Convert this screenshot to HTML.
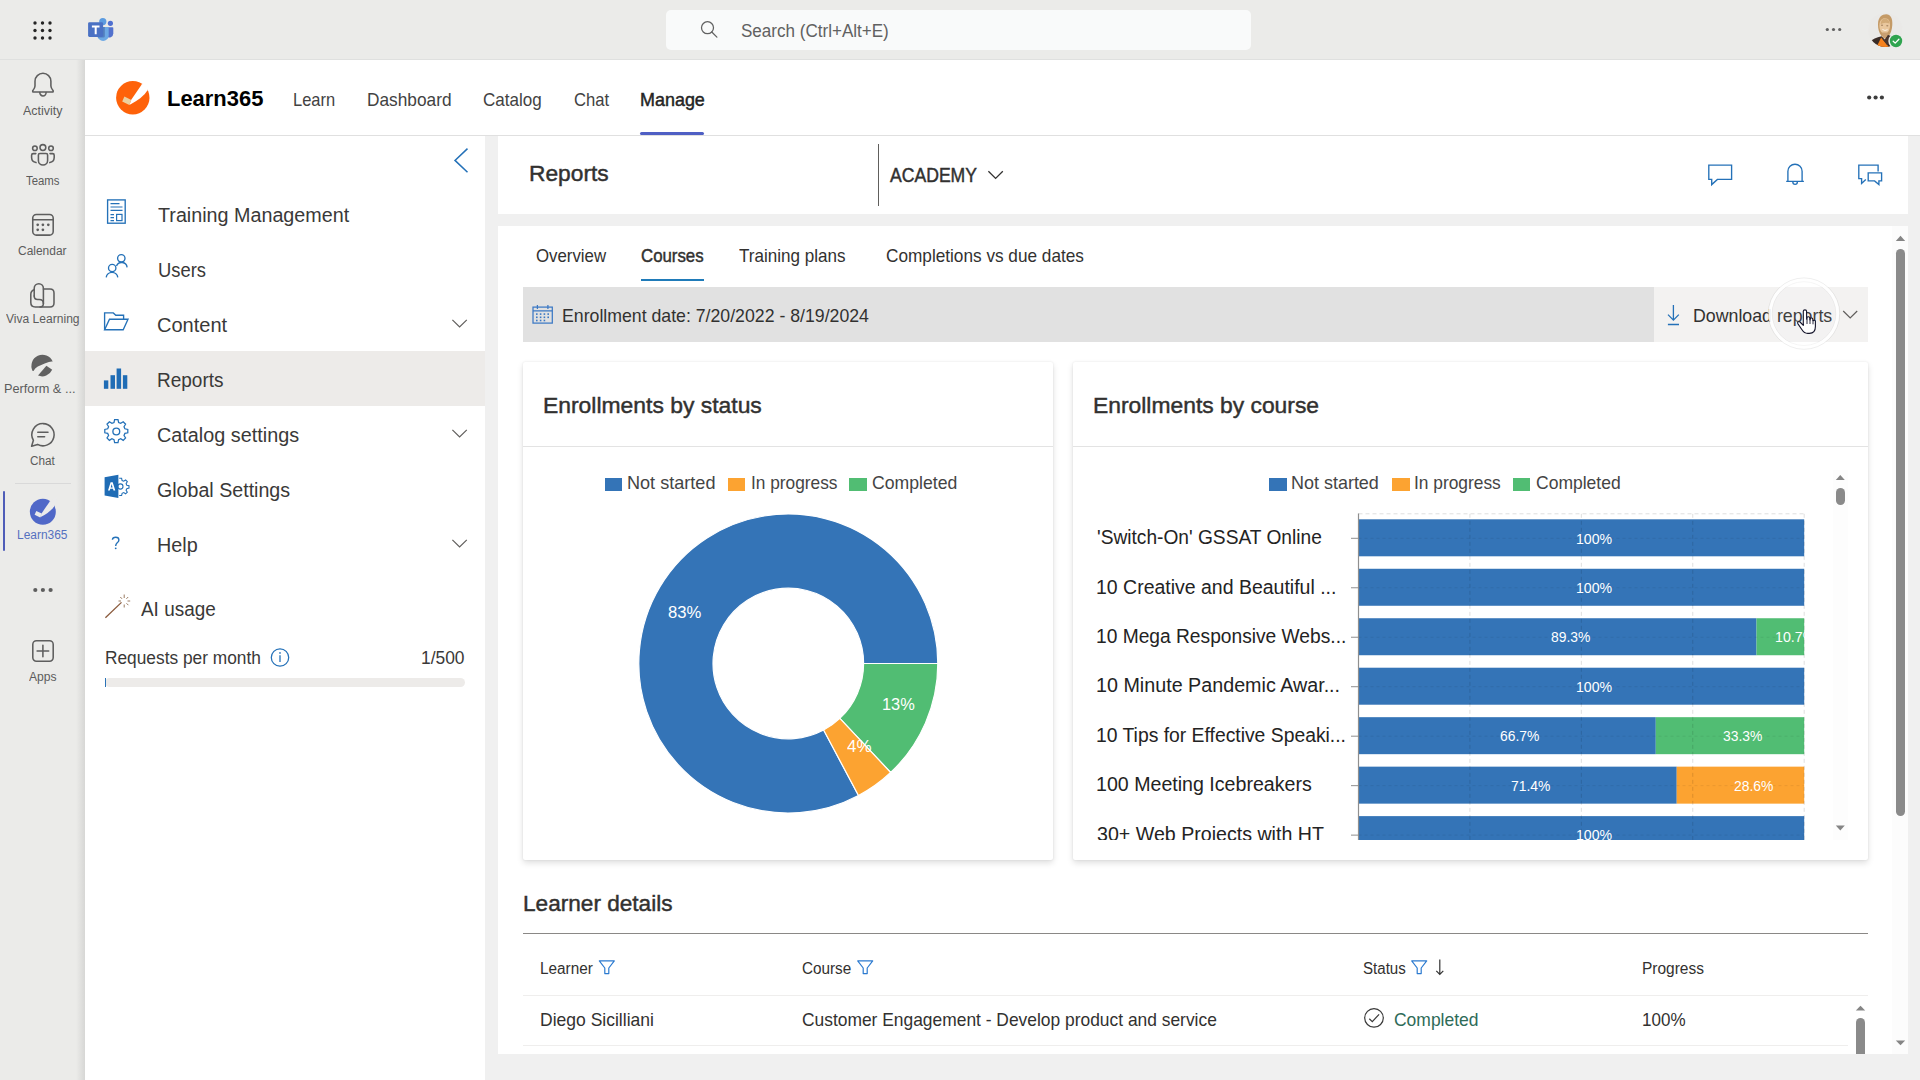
<!DOCTYPE html>
<html>
<head>
<meta charset="utf-8">
<title>Learn365</title>
<style>
*{box-sizing:border-box;margin:0;padding:0}
html,body{width:1920px;height:1080px;overflow:hidden;background:#f0f0f0;font-family:"Liberation Sans",sans-serif;color:#242424}
.abs,svg.i{position:absolute}
svg.i{overflow:visible}
.t{position:absolute;white-space:pre;line-height:1;transform-origin:0 0}
#topbar{left:0;top:0;width:1920px;height:60px;background:#ebebe9;border-bottom:1px solid #dfe0df}
#rail{left:0;top:60px;width:85px;height:1020px;background:#ebebe9}
#railshadow{left:75.5px;top:60px;width:9.5px;height:1020px;background:linear-gradient(to right,rgba(0,0,0,0),rgba(0,0,0,0.085))}
#search{left:666px;top:10px;width:585px;height:40px;background:#f9fafa;border-radius:5px}
#apphead{left:85px;top:60px;width:1835px;height:76px;background:#fff;border-bottom:1px solid #e0e0e0}
#side{left:85px;top:136px;width:400px;height:944px;background:#fff}
#rephead{left:498px;top:136px;width:1410px;height:78px;background:#fff}
#content{left:498px;top:226px;width:1410px;height:828px;background:#fff}
.card{position:absolute;background:#fff;border-radius:2px;box-shadow:0 3px 6px rgba(0,0,0,0.13),0 0 2px rgba(0,0,0,0.10)}
</style>
</head>
<body>
<div id="topbar" class="abs"></div>
<div id="rail" class="abs"></div>
<div id="railshadow" class="abs"></div>
<div id="search" class="abs"></div>
<div id="apphead" class="abs"></div>
<div id="side" class="abs"></div>
<div id="rephead" class="abs"></div>
<div id="content" class="abs"></div>
<!-- rail selection + separator -->
<div class="abs" style="left:15px;top:483px;width:56px;height:1px;background:#d9d9d9"></div>
<div class="abs" style="left:3.2px;top:491.3px;width:2px;height:59.6px;background:#4f5db8;border-radius:1px"></div>
<!-- app header underline -->
<div class="abs" style="left:640px;top:131.8px;width:64px;height:3.2px;background:#4f5fc4;border-radius:2px"></div>
<!-- side nav selected row -->
<div class="abs" style="left:85px;top:351px;width:400px;height:54.5px;background:#edebe9"></div>
<!-- progress bar -->
<div class="abs" style="left:105px;top:678px;width:360px;height:8.5px;background:#edebe9;border-radius:4.5px"></div>
<div class="abs" style="left:104.6px;top:677.5px;width:1.2px;height:9.5px;background:#2b73b7"></div>
<!-- reports header divider -->
<div class="abs" style="left:878px;top:144px;width:1px;height:62px;background:#605e5c"></div>
<!-- tab underline -->
<div class="abs" style="left:640.5px;top:278.6px;width:63.5px;height:2.8px;background:#1f7bb9"></div>
<!-- filter bar -->
<div class="abs" style="left:523px;top:287px;width:1131px;height:54.7px;background:#e1e1e1"></div>
<div class="abs" style="left:1654px;top:287px;width:214px;height:54.7px;background:#f3f2f1"></div>
<!-- cards -->
<div class="card" style="left:523px;top:362px;width:530px;height:497.5px"></div>
<div class="card" style="left:1073px;top:362px;width:795px;height:497.5px"></div>
<div class="abs" style="left:523px;top:446px;width:530px;height:1px;background:#e3e3e3"></div>
<div class="abs" style="left:1073px;top:446px;width:795px;height:1px;background:#e3e3e3"></div>
<!-- legends swatches -->
<div class="abs" style="left:605px;top:478.4px;width:17.4px;height:12.6px;background:#3474b7"></div>
<div class="abs" style="left:728px;top:478.4px;width:17.4px;height:12.6px;background:#fca331"></div>
<div class="abs" style="left:849.2px;top:478.4px;width:17.4px;height:12.6px;background:#51bd73"></div>
<div class="abs" style="left:1269.2px;top:478.4px;width:17.4px;height:12.6px;background:#3474b7"></div>
<div class="abs" style="left:1392.2px;top:478.4px;width:17.4px;height:12.6px;background:#fca331"></div>
<div class="abs" style="left:1512.8px;top:478.4px;width:17.4px;height:12.6px;background:#51bd73"></div>
<!-- donut -->
<svg class="i" style="left:628px;top:505px" width="320" height="320" viewBox="628 505 320 320">
<path fill="#3474b7" stroke="#fff" stroke-width="1.2" stroke-linejoin="round" d="M858.49 795.50 A149.5 149.5 0 1 1 937.80 663.50 L863.60 663.50 A75.3 75.3 0 1 0 823.65 729.99 Z"/>
<path fill="#51bd73" stroke="#fff" stroke-width="1.2" stroke-linejoin="round" d="M937.80 663.50 A149.5 149.5 0 0 1 890.64 772.48 L839.85 718.39 A75.3 75.3 0 0 0 863.60 663.50 Z"/>
<path fill="#fca331" stroke="#fff" stroke-width="1.2" stroke-linejoin="round" d="M890.64 772.48 A149.5 149.5 0 0 1 858.49 795.50 L823.65 729.99 A75.3 75.3 0 0 0 839.85 718.39 Z"/>
</svg>
<!-- bar chart clip group -->
<div class="abs" style="left:1073px;top:447px;width:731.6px;height:393px;overflow:hidden">
<svg class="i" style="left:0;top:0" width="732" height="393" viewBox="1073 447 732 393">
<rect x="1358.50" y="519.30" width="445.70" height="37" fill="#3474b7"/>
<rect x="1351" y="537.80" width="7.5" height="1" fill="#8f8f8f"/>
<rect x="1358.50" y="568.77" width="445.70" height="37" fill="#3474b7"/>
<rect x="1351" y="587.27" width="7.5" height="1" fill="#8f8f8f"/>
<rect x="1358.50" y="618.24" width="398.01" height="37" fill="#3474b7"/>
<rect x="1756.51" y="618.24" width="47.69" height="37" fill="#51bd73"/>
<rect x="1351" y="636.74" width="7.5" height="1" fill="#8f8f8f"/>
<rect x="1358.50" y="667.71" width="445.70" height="37" fill="#3474b7"/>
<rect x="1351" y="686.21" width="7.5" height="1" fill="#8f8f8f"/>
<rect x="1358.50" y="717.18" width="297.28" height="37" fill="#3474b7"/>
<rect x="1655.78" y="717.18" width="148.42" height="37" fill="#51bd73"/>
<rect x="1351" y="735.68" width="7.5" height="1" fill="#8f8f8f"/>
<rect x="1358.50" y="766.65" width="318.23" height="37" fill="#3474b7"/>
<rect x="1676.73" y="766.65" width="127.47" height="37" fill="#fca331"/>
<rect x="1351" y="785.15" width="7.5" height="1" fill="#8f8f8f"/>
<rect x="1358.50" y="816.12" width="445.70" height="37" fill="#3474b7"/>
<rect x="1351" y="834.62" width="7.5" height="1" fill="#8f8f8f"/>
<rect x="1357.90" y="513.5" width="1.2" height="330" fill="#8f8f8f"/>
<line x1="1469.92" y1="513.8" x2="1469.92" y2="845" stroke="#000" stroke-opacity="0.13" stroke-width="1" stroke-dasharray="4 3"/>
<line x1="1581.35" y1="513.8" x2="1581.35" y2="845" stroke="#000" stroke-opacity="0.13" stroke-width="1" stroke-dasharray="4 3"/>
<line x1="1692.78" y1="513.8" x2="1692.78" y2="845" stroke="#000" stroke-opacity="0.13" stroke-width="1" stroke-dasharray="4 3"/>
<line x1="1804.20" y1="513.8" x2="1804.20" y2="845" stroke="#000" stroke-opacity="0.13" stroke-width="1" stroke-dasharray="4 3"/>
<line x1="1358.50" y1="513.8" x2="1804.20" y2="513.8" stroke="#000" stroke-opacity="0.13" stroke-width="1" stroke-dasharray="4 3"/>
<line x1="1358.50" y1="538.30" x2="1804.20" y2="538.30" stroke="#000" stroke-opacity="0.07" stroke-width="1" stroke-dasharray="3 3"/>
<line x1="1358.50" y1="587.77" x2="1804.20" y2="587.77" stroke="#000" stroke-opacity="0.07" stroke-width="1" stroke-dasharray="3 3"/>
<line x1="1358.50" y1="637.24" x2="1804.20" y2="637.24" stroke="#000" stroke-opacity="0.07" stroke-width="1" stroke-dasharray="3 3"/>
<line x1="1358.50" y1="686.71" x2="1804.20" y2="686.71" stroke="#000" stroke-opacity="0.07" stroke-width="1" stroke-dasharray="3 3"/>
<line x1="1358.50" y1="736.18" x2="1804.20" y2="736.18" stroke="#000" stroke-opacity="0.07" stroke-width="1" stroke-dasharray="3 3"/>
<line x1="1358.50" y1="785.65" x2="1804.20" y2="785.65" stroke="#000" stroke-opacity="0.07" stroke-width="1" stroke-dasharray="3 3"/>
<line x1="1358.50" y1="835.12" x2="1804.20" y2="835.12" stroke="#000" stroke-opacity="0.07" stroke-width="1" stroke-dasharray="3 3"/>
</svg>
<span class="t" style="left:24.0px;top:81px;font-size:19.5px;color:#232323;transform:scaleX(0.9821)">&#x27;Switch-On&#x27; GSSAT Online</span>
<span class="t" style="left:23.0px;top:131px;font-size:19.5px;color:#232323;transform:scaleX(0.9990)">10 Creative and Beautiful ...</span>
<span class="t" style="left:23.0px;top:180px;font-size:19.5px;color:#232323;transform:scaleX(0.9840)">10 Mega Responsive Webs...</span>
<span class="t" style="left:23.0px;top:229px;font-size:19.5px;color:#232323;transform:scaleX(1.0112)">10 Minute Pandemic Awar...</span>
<span class="t" style="left:23.0px;top:279px;font-size:19.5px;color:#232323;transform:scaleX(0.9911)">10 Tips for Effective Speaki...</span>
<span class="t" style="left:23.0px;top:328px;font-size:19.5px;color:#232323;transform:scaleX(1.0053)">100 Meeting Icebreakers</span>
<span class="t" style="left:24.0px;top:378px;font-size:19.5px;color:#232323;transform:scaleX(1.0058)">30+ Web Projects with HT</span>
<span class="t" style="left:502.5px;top:84px;font-size:15.5px;color:#fff;transform:scaleX(0.9109)">100%</span>
<span class="t" style="left:502.5px;top:133px;font-size:15.5px;color:#fff;transform:scaleX(0.9109)">100%</span>
<span class="t" style="left:477.5px;top:182px;font-size:15.5px;color:#fff;transform:scaleX(0.8966)">89.3%</span>
<span class="t" style="left:701.6px;top:182px;font-size:15.5px;color:#fff;transform:scaleX(0.9174)">10.7%</span>
<span class="t" style="left:502.5px;top:232px;font-size:15.5px;color:#fff;transform:scaleX(0.9109)">100%</span>
<span class="t" style="left:427.1px;top:281px;font-size:15.5px;color:#fff;transform:scaleX(0.8966)">66.7%</span>
<span class="t" style="left:650.0px;top:281px;font-size:15.5px;color:#fff;transform:scaleX(0.8966)">33.3%</span>
<span class="t" style="left:437.6px;top:331px;font-size:15.5px;color:#fff;transform:scaleX(0.8966)">71.4%</span>
<span class="t" style="left:660.5px;top:331px;font-size:15.5px;color:#fff;transform:scaleX(0.8966)">28.6%</span>
<span class="t" style="left:502.5px;top:380px;font-size:15.5px;color:#fff;transform:scaleX(0.9109)">100%</span>
</div>
<!-- chart scroll -->
<div class="abs" style="left:1833px;top:470px;width:15px;height:370px;background:#fdfdfd"></div>
<svg class="i" style="left:1835px;top:474px" width="11" height="7" viewBox="0 0 11 7"><path d="M0.8 6 L5.3 1 L9.8 6 Z" fill="#858585"/></svg>
<svg class="i" style="left:1835px;top:824.5px" width="11" height="7" viewBox="0 0 11 7"><path d="M0.8 0.5 L5.3 5.5 L9.8 0.5 Z" fill="#858585"/></svg>
<div class="abs" style="left:1836px;top:488px;width:9px;height:17px;background:#8a8a8a;border-radius:4.5px"></div>
<!-- main scroll -->
<div class="abs" style="left:1892px;top:226px;width:16px;height:828px;background:#fcfcfc"></div>
<svg class="i" style="left:1895px;top:235px" width="11" height="7" viewBox="0 0 11 7"><path d="M0.8 6 L5.5 0.7 L10.2 6 Z" fill="#858585"/></svg>
<svg class="i" style="left:1895px;top:1039.5px" width="11" height="7" viewBox="0 0 11 7"><path d="M0.8 0.5 L5.5 5.3 L10.2 0.5 Z" fill="#858585"/></svg>
<div class="abs" style="left:1896px;top:249px;width:9px;height:567px;background:#8a8a8a;border-radius:4.5px"></div>
<!-- table -->
<div class="abs" style="left:523px;top:933.3px;width:1345px;height:1px;background:#8a8886"></div>
<div class="abs" style="left:523px;top:994.5px;width:1345px;height:1px;background:#efeeed"></div>
<div class="abs" style="left:523px;top:1045px;width:1325px;height:1px;background:#efeeed"></div>
<svg class="i" style="left:1855px;top:1005px" width="11" height="7" viewBox="0 0 11 7"><path d="M0.8 5.5 L5.5 0.7 L10.2 5.5 Z" fill="#858585"/></svg>
<div class="abs" style="left:1856px;top:1018px;width:9px;height:40px;background:#8a8a8a;border-radius:4.5px;clip-path:inset(0 0 4px 0)"></div>

<!-- waffle -->
<svg class="i" style="left:30px;top:18px" width="25" height="25" viewBox="30 18 25 25"><g fill="#242424">
<circle cx="35" cy="23" r="1.7"/><circle cx="42.5" cy="23" r="1.7"/><circle cx="50" cy="23" r="1.7"/>
<circle cx="35" cy="30.5" r="1.7"/><circle cx="42.5" cy="30.5" r="1.7"/><circle cx="50" cy="30.5" r="1.7"/>
<circle cx="35" cy="38" r="1.7"/><circle cx="42.5" cy="38" r="1.7"/><circle cx="50" cy="38" r="1.7"/></g></svg>
<!-- teams logo -->
<svg class="i" style="left:86px;top:16px" width="30" height="28" viewBox="86 16 30 28">
<circle cx="110.4" cy="23.3" r="2.6" fill="#4f6fd0"/>
<path d="M106.5 27.2 h6 a0.8 0.8 0 0 1 .8 .8 v5.5 a4 4 0 0 1 -6.8 2.8 Z" fill="#5271cd"/>
<circle cx="102.8" cy="21.6" r="3.6" fill="#5b9be0"/>
<path d="M97.5 27 h10.2 a1 1 0 0 1 1 1 v7.4 a5.6 5.6 0 0 1 -11.2 0 Z" fill="#6ca8e4"/>
<path d="M98 27 h6.8 v9.2 a1.2 1.2 0 0 1 -1.2 1.2 h-5.9 a5.6 5.6 0 0 1 .3 -2 Z" fill="#3f5f9f" opacity=".55"/>
<rect x="88.1" y="22.2" width="15" height="14.7" rx="1.3" fill="#4a71c4"/>
<path d="M91.9 25.6 h7.6 v1.8 h-2.8 v6.8 h-2 v-6.8 h-2.8 Z" fill="#fff"/>
</svg>
<!-- search icon -->
<svg class="i" style="left:700px;top:20px" width="20" height="20" viewBox="700 20 20 20" fill="none" stroke="#616161" stroke-width="1.25" stroke-linecap="round"><circle cx="707.5" cy="27.7" r="6"/><path d="M711.8 32 L716.9 37.1"/></svg>
<!-- more -->
<svg class="i" style="left:1824px;top:26px" width="20" height="8" viewBox="1824 26 20 8" fill="#616161"><circle cx="1827.3" cy="29.5" r="1.6"/><circle cx="1833.5" cy="29.5" r="1.6"/><circle cx="1839.7" cy="29.5" r="1.6"/></svg>
<!-- avatar -->
<svg class="i" style="left:1866px;top:11px" width="40" height="40" viewBox="1866 11 40 40">
<defs><clipPath id="avc"><circle cx="1885.3" cy="30" r="17"/></clipPath></defs>
<circle cx="1885.3" cy="30" r="17" fill="#eae9e7"/>
<g clip-path="url(#avc)">
<path d="M1878 24.5 C1878 17 1882 14.3 1886.2 14.3 C1890.6 14.3 1892.8 18.5 1892.3 25 C1892 30 1890.5 34 1888.5 36 L1881.5 36 C1879 33 1878 29 1878 24.5 Z" fill="#c49a66"/>
<path d="M1879.4 25.5 C1879.4 20.5 1882 18.3 1884.8 18.3 C1888.4 18.3 1890.3 21 1890 26 C1889.7 30.5 1887.6 33.6 1884.7 33.6 C1881.6 33.6 1879.4 30.3 1879.4 25.5 Z" fill="#e9c79d"/>
<path d="M1880.6 24.2 Q1884 21.6 1889.6 23.4 Q1889 19 1885 18.6 Q1881 18.6 1880.6 24.2 Z" fill="#d2ab78"/>
<path d="M1882.3 32.5 H1887.6 V38.5 H1882.3 Z" fill="#caa072"/>
<ellipse cx="1882" cy="25.3" rx="1.1" ry="0.7" fill="#8a6848" opacity=".65"/><ellipse cx="1887.3" cy="25.7" rx="1.1" ry="0.7" fill="#8a6848" opacity=".65"/>
<path d="M1882.4 29.4 Q1884.8 31.4 1887.6 29.7" fill="none" stroke="#fbf3ea" stroke-width="1"/>
<path d="M1869 42.5 Q1874 37.6 1881.6 36.2 L1884.8 39.8 L1888 35 Q1895 36 1899 44 L1899 49 L1869 49 Z" fill="#3a2c27"/>
<path d="M1875.5 49 L1881.2 37.6 L1890.5 49 Z" fill="#f6821e"/>
<path d="M1881.2 37.6 L1884.8 39.8 L1888 35.2 L1891 42 L1887 45 Z" fill="#4a352c"/>
</g>
<circle cx="1896" cy="41" r="7.7" fill="#ebebe9"/>
<circle cx="1896" cy="41" r="6.2" fill="#2fa44f"/>
<path d="M1893.2 41.2 L1895.2 43.1 L1898.9 39.2" fill="none" stroke="#fff" stroke-width="1.3" stroke-linecap="round" stroke-linejoin="round"/>
</svg>
<!-- app header more -->
<svg class="i" style="left:1866px;top:94px" width="20" height="8" viewBox="1866 94 20 8" fill="#3d3d3d"><circle cx="1869.2" cy="97.5" r="2.1"/><circle cx="1875.6" cy="97.5" r="2.1"/><circle cx="1881.9" cy="97.5" r="2.1"/></svg>

<svg class="i" style="left:0;top:60px" width="85" height="640" viewBox="0 60 85 640" fill="none" stroke="#5e5e5e" stroke-width="1.55" stroke-linecap="round" stroke-linejoin="round">
<!-- activity bell -->
<path d="M35 86 V81.2 A7.95 7.95 0 0 1 50.9 81.2 V86 Q51 88.2 53 90.4 Q53.7 92 52.3 92 H33.6 Q32.2 92 32.9 90.4 Q34.9 88.2 35 86 Z"/>
<path d="M39.8 92.4 A3.15 3.5 0 0 0 46.1 92.4"/>
<!-- teams -->
<circle cx="42.9" cy="147.5" r="2.9"/><circle cx="34.9" cy="148.2" r="2.3"/><circle cx="51" cy="148.2" r="2.3"/>
<path d="M39.9 153.4 H46.1 Q47.6 153.4 47.6 154.9 V160.4 A4.6 4.6 0 0 1 38.4 160.4 V154.9 Q38.4 153.4 39.9 153.4 Z"/>
<path d="M35.8 153.6 H33.2 Q31.6 153.6 31.6 155.2 V157.6 A5.2 5.2 0 0 0 36 162.6"/>
<path d="M50 153.6 H52.6 Q54.2 153.6 54.2 155.2 V157.6 A5.2 5.2 0 0 1 49.8 162.6"/>
<!-- calendar -->
<rect x="32.75" y="214.5" width="20.45" height="20.6" rx="3.6"/>
<path d="M32.75 219.7 H53.2"/>
<g fill="#5e5e5e" stroke="none"><circle cx="37.7" cy="224.8" r="1.35"/><circle cx="42.9" cy="224.8" r="1.35"/><circle cx="48.3" cy="224.8" r="1.35"/><circle cx="37.7" cy="229.8" r="1.35"/><circle cx="42.9" cy="229.8" r="1.35"/></g>
<!-- viva learning -->
<path d="M34.2 296 V288.4 A4.6 4.6 0 0 1 43.4 288.4 V303.5"/>
<path d="M34.2 296 Q34.2 299.4 37.6 299.4 H39.2 Q43.4 299.4 43.4 303.5 Q43.4 307 40 307"/>
<path d="M34.2 289.7 Q30.8 290.6 30.8 294.5 V302.6 Q30.8 307 35.2 307 H50 Q54 307 54 303 V293 Q54 289 50 289 H43.4"/>
<!-- perform -->
<g fill="#616161" stroke="none">
<path d="M32.6 370.9 A11.1 11.1 0 1 1 52.7 361.5 Q50.3 360.9 45.3 363.3 Q38.8 365.9 37.4 366.8 Q35 368.4 33.5 370.9 Z"/>
<path d="M46.4 365.7 L52.2 369.8 A11.1 11.1 0 0 1 38 375.6 Z"/>
</g>
<!-- chat -->
<path d="M43 423.6 A11.1 11.1 0 1 1 37.6 444.4 L31.6 446.2 L33.4 440.3 A11.1 11.1 0 0 1 43 423.6 Z"/>
<path d="M37.8 432.2 H48 M37.8 436.8 H44.6"/>
<!-- more -->
<g fill="#5e5e5e" stroke="none"><circle cx="35.3" cy="590" r="2.1"/><circle cx="42.9" cy="590" r="2.1"/><circle cx="50.6" cy="590" r="2.1"/></g>
<!-- apps -->
<rect x="32.8" y="640.8" width="20.4" height="20.4" rx="3.6"/>
<path d="M42.9 645.2 V656.8 M37.1 651 H48.7"/>
</svg>
<!-- learn365 rail icon -->
<svg class="i" style="left:29px;top:498px" width="28" height="28" viewBox="115 79.5 36 36">
<circle cx="132.8" cy="97.2" r="16.7" fill="#5068c8"/>
<path d="M131.1 99.4 L141.7 83.9 L151 78 L147.4 90 Q143 97.5 129.4 104.4 Z" fill="#ebebeb"/>
<path d="M124.4 96.1 L131.3 99.4 L129.4 104.6 L122.2 101.1 Z" fill="#ebebeb"/>
</svg>
<!-- learn365 header logo -->
<svg class="i" style="left:115px;top:79.5px" width="36" height="36" viewBox="115 79.5 36 36">
<circle cx="132.8" cy="97.2" r="16.7" fill="#fe620a"/>
<path d="M131.1 99.4 L141.7 83.9 L151 78 L147.4 90 Q143 97.5 129.4 104.4 Z" fill="#fff"/>
<path d="M124.4 96.1 L131.3 99.4 L129.4 104.6 L122.2 101.1 Z" fill="#ecd0a0"/>
</svg>

<svg class="i" style="left:85px;top:136px" width="400" height="570" viewBox="85 136 400 570" fill="none" stroke="#2471b8" stroke-width="1.35" stroke-linejoin="miter">
<!-- collapse chevron -->
<path d="M467.5 148.6 L455 160.4 L467.5 172.2" stroke-width="1.5"/>
<!-- training management -->
<rect x="107.6" y="199.9" width="17.6" height="23.3"/>
<path d="M110.5 203.6 H119.5 M110.5 207 H122.5 M110.5 210.4 H122.5 M110.5 214.6 H114 M110.5 217.6 H114 M110.5 220.6 H114" stroke-width="1.2"/>
<rect x="116.6" y="214.4" width="5.4" height="6.2" stroke-width="1.2"/>
<!-- users -->
<circle cx="121.3" cy="258.3" r="3.7"/>
<path d="M116.5 266 A5.5 5.5 0 0 1 127.1 267.4"/>
<circle cx="112.2" cy="268" r="3.7"/>
<path d="M106.2 277.4 A5.85 5.85 0 0 1 117.8 277.4"/>
<!-- content folder -->
<path d="M104.6 329.6 V312.9 H113.3 L115.8 315.2 H123.6 V319.2"/>
<path d="M104.6 329.7 L109.5 319.2 H128 L123.2 329.7 Z"/>
<!-- catalog settings gear -->
<circle cx="116.3" cy="431.5" r="3.4"/>
<path id="gear" d="M114.6 419.6 H118 L118.6 422.5 L120.7 423.4 L123.2 421.8 L125.6 424.2 L124 426.7 L124.9 428.8 L127.8 429.4 V432.8 L124.9 433.4 L124 435.5 L125.6 438 L123.2 440.4 L120.7 438.8 L118.6 439.7 L118 442.6 H114.6 L114 439.7 L111.9 438.8 L109.4 440.4 L107 438 L108.6 435.5 L107.7 433.4 L104.8 432.8 V429.4 L107.7 428.8 L108.6 426.7 L107 424.2 L109.4 421.8 L111.9 423.4 L114 422.5 Z" stroke-width="1.25"/>
<!-- help ? -->
<path d="M112.4 539.8 Q112.6 537.2 115.7 537.2 Q118.9 537.2 118.9 539.9 Q118.9 541.4 117.2 542.7 Q115.7 543.9 115.7 545.9" stroke-width="1.4"/>
<circle cx="115.7" cy="548.3" r="0.9" fill="#2471b8" stroke="none"/>
<!-- chevrons down -->
<g stroke="#605e5c" stroke-width="1.2"><path d="M452.4 319.9 L459.6 327 L466.8 319.9"/><path d="M452.4 429.9 L459.6 437 L466.8 429.9"/><path d="M452.4 539.9 L459.6 547 L466.8 539.9"/></g>
<!-- info icon -->
<circle cx="280" cy="657.5" r="8.7" stroke-width="1.25"/>
<path d="M280 655.3 V662" stroke-width="1.3"/><circle cx="280" cy="652.9" r="0.85" fill="#2471b8" stroke="none"/>
<!-- AI wand -->
<g stroke="#8a5a3c" stroke-width="1.3"><path d="M105.4 617.8 L121.5 602.4"/></g>
<g stroke="#9a7a60" stroke-width="1"><path d="M124.2 594.5 V598 M124.2 604.5 V607.5 M118.5 601 H121 M127.5 601 H130.2 M120.3 597 L122 598.8 M126.5 603.3 L128.4 605.2 M128.2 597 L126.4 598.8"/></g>
</svg>
<!-- reports bars icon -->
<svg class="i" style="left:103px;top:366px" width="26" height="24" viewBox="103 366 26 24" fill="#1f6cb5">
<rect x="103.9" y="380.4" width="4.4" height="8.4"/><rect x="110.5" y="375.2" width="4.5" height="13.6"/><rect x="116.6" y="368.5" width="4.5" height="20.3"/><rect x="122.9" y="375.2" width="4.4" height="13.6"/>
</svg>
<!-- global settings icon -->
<svg class="i" style="left:103px;top:473px" width="28" height="27" viewBox="103 473 28 27">
<g fill="none" stroke="#2471b8" stroke-width="1.1" transform="translate(-1.1 0)"><circle cx="121.5" cy="486.5" r="2.6"/>
<path d="M120.3 478.3 H122.7 L123.2 480.5 L124.8 481.2 L126.7 480 L128.4 481.7 L127.2 483.6 L127.9 485.2 L130.1 485.7 V488.1 L127.9 488.6 L127.2 490.2 L128.4 492.1 L126.7 493.8 L124.8 492.6 L123.2 493.3 L122.7 495.5 H120.3"/></g>
<path d="M104.6 477.2 L118.4 474.7 V498 L104.6 495.6 Z" fill="#1f6cb5"/>
<path d="M108 490.6 L110.6 482.2 H112.7 L115.3 490.6 H113.5 L113 488.8 H110.3 L109.8 490.6 Z M110.7 487.4 H112.6 L111.65 484 Z" fill="#fff" fill-rule="evenodd"/>
</svg>

<svg class="i" style="left:498px;top:136px" width="1410" height="918" viewBox="498 136 1410 918" fill="none" stroke="#2471b8" stroke-width="1.35">
<!-- header right icons -->
<path d="M1708.8 165.1 H1731.6 V179.4 H1717.4 L1711.7 184.6 V179.4 H1708.8 Z"/>
<path d="M1787.9 181.4 V171.3 A7.1 7.1 0 0 1 1802.1 171.3 V181.4 M1786.2 181.4 H1803.9 M1792.8 181.8 A2.3 2.6 0 0 0 1797.4 181.8"/>
<path d="M1878.1 171.6 V165.1 H1858.8 V178.6 H1861.6 V183.4 L1865.8 179.4"/>
<path d="M1868.2 172.9 H1881.6 V180.9 H1878.9 V184.6 L1874.6 180.9 H1868.2 Z"/>
<!-- academy chevron -->
<path d="M988.4 171.2 L995.6 178.4 L1002.8 171.2" stroke="#323130" stroke-width="1.3"/>
<!-- calendar icon -->
<g stroke="#3b78c4" stroke-width="1.25"><rect x="533" y="307.1" width="19.3" height="16"/><path d="M533 310.9 H552.3 M537.4 305 V309 M547.9 305 V309"/></g>
<g fill="#3b78c4" stroke="none">
<rect x="536" y="313.3" width="1.6" height="1.6"/><rect x="539.8" y="313.3" width="1.6" height="1.6"/><rect x="543.6" y="313.3" width="1.6" height="1.6"/><rect x="547.4" y="313.3" width="1.6" height="1.6"/>
<rect x="536" y="316.5" width="1.6" height="1.6"/><rect x="539.8" y="316.5" width="1.6" height="1.6"/><rect x="543.6" y="316.5" width="1.6" height="1.6"/><rect x="547.4" y="316.5" width="1.6" height="1.6"/>
<rect x="536" y="319.7" width="1.6" height="1.6"/><rect x="539.8" y="319.7" width="1.6" height="1.6"/><rect x="543.6" y="319.7" width="1.6" height="1.6"/></g>
<!-- download icon -->
<path d="M1673.4 305.1 V320 M1668 314.6 L1673.4 320.1 L1678.8 314.6 M1667.9 324.5 H1679" stroke-width="1.3"/>
<path d="M1843.2 311 L1850.2 318 L1857.2 311" stroke="#605e5c" stroke-width="1.2"/>
<!-- filter icons -->
<g stroke="#2b7ad0" stroke-width="1.2" stroke-linejoin="round">
<path id="fl" d="M599.3 960.9 H614.3 L608.8 968 V973.6 H604.8 V968 Z"/>
<path d="M857.7 960.9 H872.7 L867.2 968 V973.6 H863.2 V968 Z"/>
<path d="M1411.7 960.9 H1426.7 L1421.2 968 V973.6 H1417.2 V968 Z"/>
</g>
<!-- sort arrow -->
<path d="M1439.8 959.4 V974 M1436.3 970.8 L1439.8 974.3 L1443.3 970.8" stroke="#333" stroke-width="1.2"/>
<!-- check circle -->
<g stroke="#3a3a3a" stroke-width="1.2"><circle cx="1374" cy="1017.9" r="9.3"/><path d="M1369.3 1018.7 L1372.3 1021.6 L1379.1 1014.3"/></g>
</svg>

<span class="t" style="left:741.0px;top:23px;font-size:17.5px;color:#616161;transform:scaleX(0.9742)">Search (Ctrl+Alt+E)</span>
<span class="t" style="left:22.8px;top:105px;font-size:12.5px;color:#5c5c5c;transform:scaleX(0.9966)">Activity</span>
<span class="t" style="left:26.0px;top:175px;font-size:12.5px;color:#5c5c5c;transform:scaleX(0.9107)">Teams</span>
<span class="t" style="left:18.3px;top:245px;font-size:12.5px;color:#5c5c5c;transform:scaleX(0.9572)">Calendar</span>
<span class="t" style="left:5.7px;top:313px;font-size:12.5px;color:#5c5c5c;transform:scaleX(0.9651)">Viva Learning</span>
<span class="t" style="left:4.0px;top:383px;font-size:12.5px;color:#5c5c5c;transform:scaleX(1.0192)">Perform &amp; ...</span>
<span class="t" style="left:29.9px;top:455px;font-size:12.5px;color:#5c5c5c;transform:scaleX(0.9394)">Chat</span>
<span class="t" style="left:16.6px;top:529px;font-size:12.5px;color:#5570c0;transform:scaleX(0.9562)">Learn365</span>
<span class="t" style="left:28.9px;top:671px;font-size:12.5px;color:#5c5c5c;transform:scaleX(0.9702)">Apps</span>
<span class="t" style="left:167.3px;top:87px;font-size:22.8px;color:#000;transform:scaleX(0.9624);font-weight:bold">Learn365</span>
<span class="t" style="left:293.1px;top:91px;font-size:18.5px;color:#424242;transform:scaleX(0.8908)">Learn</span>
<span class="t" style="left:366.8px;top:91px;font-size:18.5px;color:#424242;transform:scaleX(0.9337)">Dashboard</span>
<span class="t" style="left:483.3px;top:91px;font-size:18.5px;color:#424242;transform:scaleX(0.9200)">Catalog</span>
<span class="t" style="left:574.0px;top:91px;font-size:18.5px;color:#424242;transform:scaleX(0.8989)">Chat</span>
<span class="t" style="left:639.7px;top:91px;font-size:18.5px;color:#242424;transform:scaleX(0.9700);-webkit-text-stroke:0.45px #242424">Manage</span>
<span class="t" style="left:158.4px;top:205px;font-size:20px;color:#3a3938;transform:scaleX(0.9863)">Training Management</span>
<span class="t" style="left:157.5px;top:260px;font-size:20px;color:#3a3938;transform:scaleX(0.9194)">Users</span>
<span class="t" style="left:157.4px;top:315px;font-size:20px;color:#3a3938;transform:scaleX(1.0016)">Content</span>
<span class="t" style="left:157.4px;top:370px;font-size:20px;color:#3a3938;transform:scaleX(0.9503)">Reports</span>
<span class="t" style="left:157.4px;top:425px;font-size:20px;color:#3a3938;transform:scaleX(0.9907)">Catalog settings</span>
<span class="t" style="left:157.4px;top:480px;font-size:20px;color:#3a3938;transform:scaleX(0.9812)">Global Settings</span>
<span class="t" style="left:157.4px;top:535px;font-size:20px;color:#3a3938;transform:scaleX(0.9898)">Help</span>
<span class="t" style="left:140.8px;top:599px;font-size:20px;color:#3a3938;transform:scaleX(0.9464)">AI usage</span>
<span class="t" style="left:104.5px;top:650px;font-size:17.5px;color:#3a3938;transform:scaleX(0.9888)">Requests per month</span>
<span class="t" style="left:421.0px;top:650px;font-size:17.5px;color:#3a3938;transform:scaleX(0.9940)">1/500</span>
<span class="t" style="left:528.7px;top:162px;font-size:22.8px;color:#323130;transform:scaleX(0.9984);-webkit-text-stroke:0.45px #323130">Reports</span>
<span class="t" style="left:890.3px;top:166px;font-size:19.5px;color:#323130;transform:scaleX(0.9022);-webkit-text-stroke:0.45px #323130">ACADEMY</span>
<span class="t" style="left:536.3px;top:247px;font-size:18.5px;color:#323130;transform:scaleX(0.9095)">Overview</span>
<span class="t" style="left:641.3px;top:247px;font-size:18.5px;color:#323130;transform:scaleX(0.9091);-webkit-text-stroke:0.45px #323130">Courses</span>
<span class="t" style="left:739.0px;top:247px;font-size:18.5px;color:#323130;transform:scaleX(0.9222)">Training plans</span>
<span class="t" style="left:886.3px;top:247px;font-size:18.5px;color:#323130;transform:scaleX(0.9298)">Completions vs due dates</span>
<span class="t" style="left:562.3px;top:307px;font-size:18.5px;color:#323130;transform:scaleX(0.9565)">Enrollment date: 7/20/2022 - 8/19/2024</span>
<span class="t" style="left:1693.0px;top:307px;font-size:18.5px;color:#323130;transform:scaleX(0.9601)">Download reports</span>
<span class="t" style="left:542.6px;top:394px;font-size:22.8px;color:#323130;transform:scaleX(1.0040);-webkit-text-stroke:0.45px #323130">Enrollments by status</span>
<span class="t" style="left:1092.6px;top:394px;font-size:22.8px;color:#323130;transform:scaleX(1.0024);-webkit-text-stroke:0.45px #323130">Enrollments by course</span>
<span class="t" style="left:627.3px;top:474px;font-size:18.5px;color:#444444;transform:scaleX(0.9776)">Not started</span>
<span class="t" style="left:750.5px;top:474px;font-size:18.5px;color:#444444;transform:scaleX(0.9349)">In progress</span>
<span class="t" style="left:872.0px;top:474px;font-size:18.5px;color:#444444;transform:scaleX(0.9532)">Completed</span>
<span class="t" style="left:1291.2px;top:474px;font-size:18.5px;color:#444444;transform:scaleX(0.9709)">Not started</span>
<span class="t" style="left:1413.8px;top:474px;font-size:18.5px;color:#444444;transform:scaleX(0.9376)">In progress</span>
<span class="t" style="left:1536.2px;top:474px;font-size:18.5px;color:#444444;transform:scaleX(0.9464)">Completed</span>
<span class="t" style="left:668.0px;top:604px;font-size:17px;color:#fff;transform:scaleX(0.9791)">83%</span>
<span class="t" style="left:881.8px;top:696px;font-size:17px;color:#fff;transform:scaleX(0.9633)">13%</span>
<span class="t" style="left:847.3px;top:738px;font-size:17px;color:#fff;transform:scaleX(0.9937)">4%</span>
<span class="t" style="left:522.6px;top:892px;font-size:22.8px;color:#323130;transform:scaleX(0.9916);-webkit-text-stroke:0.45px #323130">Learner details</span>
<span class="t" style="left:539.5px;top:961px;font-size:16px;color:#323130;transform:scaleX(0.9577)">Learner</span>
<span class="t" style="left:802.4px;top:961px;font-size:16px;color:#323130;transform:scaleX(0.9549)">Course</span>
<span class="t" style="left:1362.7px;top:961px;font-size:16px;color:#323130;transform:scaleX(0.9436)">Status</span>
<span class="t" style="left:1642.0px;top:961px;font-size:16px;color:#323130;transform:scaleX(0.9679)">Progress</span>
<span class="t" style="left:539.6px;top:1011px;font-size:18.5px;color:#323130;transform:scaleX(0.9467)">Diego Sicilliani</span>
<span class="t" style="left:802.4px;top:1011px;font-size:18.5px;color:#323130;transform:scaleX(0.9404)">Customer Engagement - Develop product and service</span>
<span class="t" style="left:1394.4px;top:1011px;font-size:18.5px;color:#2e6b58;transform:scaleX(0.9442)">Completed</span>
<span class="t" style="left:1642.1px;top:1011px;font-size:18.5px;color:#323130;transform:scaleX(0.9201)">100%</span>
<!-- click ripple + cursor -->
<svg class="i" style="left:1760px;top:270px" width="90" height="90" viewBox="1760 270 90 90">
<circle cx="1804" cy="313.6" r="33.8" fill="rgba(255,255,255,0.07)" stroke="rgba(255,255,255,0.92)" stroke-width="3.4"/>
<circle cx="1804" cy="313.6" r="35.7" fill="none" stroke="rgba(0,0,0,0.075)" stroke-width="0.9"/>
<circle cx="1804" cy="313.6" r="31.9" fill="none" stroke="rgba(0,0,0,0.05)" stroke-width="0.8"/>
<path d="M1803.3 311.2 C1803.3 309.4 1806.6 309.4 1806.6 311.2 V319.2 L1807 319.2 V317.6 C1807.6 316.3 1809.6 316.6 1809.8 317.9 V319.8 L1810.2 319.9 V318.6 C1810.9 317.5 1812.7 317.9 1812.8 319.1 V320.8 L1813.2 320.9 C1813.6 319.8 1815.3 320.1 1815.4 321.4 V326.6 C1815.4 331 1812.9 333.4 1809.4 333.4 H1807.6 C1804.9 333.4 1803.4 332 1802 329.8 L1797.8 323.6 C1797 322.2 1798.8 320.9 1800 322 L1803.3 325.4 Z" fill="#fff" stroke="#14142a" stroke-width="1.1" stroke-linejoin="round"/>
<path d="M1807 319.5 V324 M1810 320 V324 M1813 321.2 V324.3" stroke="#14142a" stroke-width="0.9" fill="none"/>
</svg>

</body>
</html>
